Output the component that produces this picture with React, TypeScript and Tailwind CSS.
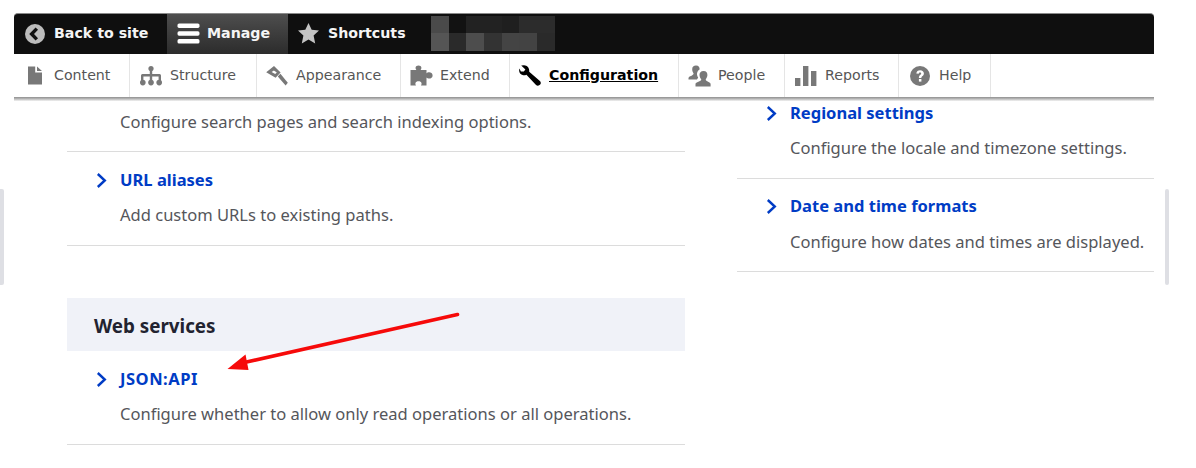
const ICON = '#787878';

function BackIcon() {
  return (
    <svg width="20" height="20" viewBox="0 0 20 20" className="shrink-0">
      <circle cx="10" cy="10" r="10" fill="#bdbdbd" />
      <path d="M11.8 4.6 L6.6 10 L11.8 15.4" fill="none" stroke="#111" strokeWidth="3.4" />
    </svg>
  );
}

function MenuIcon() {
  return (
    <svg width="23" height="21" viewBox="0 0 23 21" className="shrink-0">
      <rect x="0.5" y="0.5" width="22" height="4.4" rx="1.6" fill="#fff" />
      <rect x="0.5" y="8.3" width="22" height="4.4" rx="1.6" fill="#fff" />
      <rect x="0.5" y="16.1" width="22" height="4.4" rx="1.6" fill="#fff" />
    </svg>
  );
}

function StarIcon() {
  return (
    <svg width="21" height="21" viewBox="0 0 21 21" className="shrink-0">
      <path d="M10.5 0 L13.7 6.8 L21 7.6 L15.6 12.6 L17.2 20.5 L10.5 16.6 L3.8 20.5 L5.4 12.6 L0 7.6 L7.3 6.8 Z" fill="#c4c4c4" />
    </svg>
  );
}

function ContentIcon() {
  return (
    <svg width="16" height="19" viewBox="0 0 16 19" className="shrink-0">
      <path d="M1 0.5 H8.2 V6.6 H15 V18.5 H1 Z M10 0.5 L15 5 H10 Z" fill={ICON} />
    </svg>
  );
}

function StructureIcon() {
  return (
    <svg width="22" height="20" viewBox="0 0 22 20" className="shrink-0">
      <circle cx="11" cy="2.6" r="2.6" fill={ICON} />
      <path d="M9.8 4 H12.2 V8 H19.6 Q21 8 21 9.5 V15 H18.6 V10.4 H12.2 V15 H9.8 V10.4 H3.4 V15 H1 V9.5 Q1 8 2.4 8 H9.8 Z" fill={ICON} />
      <circle cx="2.8" cy="16.6" r="2.8" fill={ICON} />
      <circle cx="11" cy="16.6" r="2.8" fill={ICON} />
      <circle cx="19.2" cy="16.6" r="2.8" fill={ICON} />
    </svg>
  );
}

function AppearanceIcon() {
  return (
    <svg width="22" height="20" viewBox="0 0 22 20" className="shrink-0">
      <path d="M8 0 L14.6 6.6 L9.6 11.8 L0.2 6.2 Z M7.9 4.4 L5.6 6 L9.2 8 L10.8 6.4 Z" fill={ICON} fillRule="evenodd" />
      <path d="M11.8 10.4 L14.4 7.8 L21.8 16.8 L19.6 19.4 Z" fill={ICON} />
    </svg>
  );
}

function ExtendIcon() {
  return (
    <svg width="23" height="21" viewBox="0 0 23 21" className="shrink-0">
      <path d="M0.5 5 H6.4 C5 3.6 5.2 0.6 8.5 0.6 C11.8 0.6 12 3.6 10.6 5 H16.5 V8.4 C18 6.6 22.6 6.9 22.6 10.4 C22.6 13.9 18 14.2 16.5 12.4 V20.5 H11 C12.2 18.6 11.6 16.2 8.5 16.2 C5.4 16.2 4.8 18.6 6 20.5 H0.5 Z" fill={ICON} />
    </svg>
  );
}

function WrenchIcon() {
  return (
    <svg width="22" height="21" viewBox="0 0 22 21" className="shrink-0">
      <path d="M5 0.3 L2.2 0.6 L6.4 4.4 L4.8 6.6 L1.9 6.4 L0.4 3.4 C-0.5 6.4 0.7 9.7 4.2 10.2 C5.4 10.3 6.4 10.2 7.4 9.7 L16.8 19.8 C18.2 21.2 20.2 20.8 21.2 19.6 C22.2 18.4 22 16.8 20.6 15.7 L10.2 6.8 C10.6 3.4 8.6 0.4 5 0.3 Z" fill="#000" />
    </svg>
  );
}

function PeopleIcon() {
  return (
    <svg width="23" height="22" viewBox="0 0 23 22" className="shrink-0">
      <path d="M8 0.5 C10.8 0.5 11.8 2.6 11.6 4.6 C10 5.4 8.8 7.4 9 9.6 C9.1 10.8 9.6 11.8 10.2 12.5 L9 14.6 H0.5 V13 C0.5 11 5.6 10.6 5.6 8.4 C4.8 7.4 4.2 5.8 4.2 4.2 C4.2 1.8 5.6 0.5 8 0.5 Z" fill={ICON} />
      <path d="M15.5 6 C18.4 6 19.6 8.2 19.4 10.2 C19.3 11.8 18.4 13.4 17.7 14.4 C17.7 16.4 22.6 16.8 22.6 19 V21.5 H7.5 V19 C7.5 16.8 13.3 16.4 13.3 14.4 C12.4 13.4 11.6 11.8 11.5 10 C11.4 7.8 12.8 6 15.5 6 Z" fill={ICON} />
    </svg>
  );
}

function ReportsIcon() {
  return (
    <svg width="22" height="20" viewBox="0 0 22 20" className="shrink-0">
      <rect x="0" y="12" width="5.4" height="8" fill={ICON} />
      <rect x="8" y="0" width="5.4" height="20" fill={ICON} />
      <rect x="16" y="5" width="5.4" height="15" fill={ICON} />
    </svg>
  );
}

function HelpIcon() {
  return (
    <svg width="20" height="20" viewBox="0 0 20 20" className="shrink-0">
      <circle cx="10" cy="10" r="10" fill={ICON} />
      <path d="M6.3 7.6 C6.4 5.4 8 4.2 10.1 4.2 C12.4 4.2 13.9 5.5 13.9 7.4 C13.9 9.9 11.4 9.8 11.4 12 H8.9 C8.9 8.9 11.2 8.9 11.2 7.5 C11.2 6.8 10.8 6.4 10 6.4 C9.2 6.4 8.8 6.9 8.8 7.8 Z" fill="#fff" />
      <rect x="8.9" y="13" width="2.5" height="2.6" fill="#fff" />
    </svg>
  );
}

function Chevron() {
  return (
    <svg width="11" height="15" viewBox="0 0 11 15" className="shrink-0">
      <path d="M1.8 1 L8.8 7.5 L1.8 14" fill="none" stroke="#003cc5" strokeWidth="2.4" />
    </svg>
  );
}

const trayItems = [
  { label: 'Content', icon: <ContentIcon />, width: 'w-[116px]', pad: 'pl-[13px]', gap: 'gap-[11px]' },
  { label: 'Structure', icon: <StructureIcon />, width: 'w-[127px]', pad: 'pl-[10px]', gap: 'gap-[8px]' },
  { label: 'Appearance', icon: <AppearanceIcon />, width: 'w-[144px]', pad: 'pl-[9px]', gap: 'gap-[8px]' },
  { label: 'Extend', icon: <ExtendIcon />, width: 'w-[109px]', pad: 'pl-[9px]', gap: 'gap-[7px]' },
  { label: 'Configuration', icon: <WrenchIcon />, width: 'w-[169px]', pad: 'pl-[9px]', gap: 'gap-[8px]', active: true },
  { label: 'People', icon: <PeopleIcon />, width: 'w-[106px]', pad: 'pl-[9px]', gap: 'gap-[7px]' },
  { label: 'Reports', icon: <ReportsIcon />, width: 'w-[114px]', pad: 'pl-[10px]', gap: 'gap-[8px]' },
  { label: 'Help', icon: <HelpIcon />, width: 'w-[92px]', pad: 'pl-[11px]', gap: 'gap-[9px]' },
];

const blurRows = [
  ['bg-[#4a4a4a]', 'bg-[#121212]', 'bg-[#222222]', 'bg-[#222222]', 'bg-[#1f1f1f]', 'bg-[#2c2c2c]', 'bg-[#2c2c2c]'],
  ['bg-[#555555]', 'bg-[#2a2a2a]', 'bg-[#4d4d4d]', 'bg-[#333333]', 'bg-[#444444]', 'bg-[#434343]', 'bg-[#2a2a2a]'],
];

function Toolbar() {
  return (
    <div className="relative z-10 mx-[14px] w-[1140px] font-['DejaVu_Sans',sans-serif]">
      <div className="flex h-[41px] items-stretch rounded-t-[4px] border-t border-[#8a8a8a] bg-[#0f0f0f] pb-[2px] text-[14.2px] font-bold text-[#f5f5f5]">
        <div className="-mb-[2px] flex w-[153px] items-center gap-[9px] pb-[1px] pl-[11px]">
          <BackIcon />
          <span>Back to site</span>
        </div>
        <div className="-mb-[2px] flex w-[121px] items-center gap-[7px] bg-gradient-to-b from-[#4e4e4e] to-[#2c2c2c] pb-[1px] pl-[10px]">
          <MenuIcon />
          <span>Manage</span>
        </div>
        <div className="-mb-[2px] flex w-[143px] items-center gap-[9px] pb-[1px] pl-[10px]">
          <StarIcon />
          <span>Shortcuts</span>
        </div>
        <div className="flex flex-col self-center">
          {blurRows.map((row, i) => (
            <div key={i} className="flex">
              {row.map((c, j) => (
                <div key={j} className={`h-[17.5px] w-[17.7px] ${c}`} />
              ))}
            </div>
          ))}
        </div>
      </div>
      <div className="flex h-[43px] items-stretch bg-white text-[14.2px] text-[#565656]">
        {trayItems.map((item) => (
          <div
            key={item.label}
            className={`flex items-center border-r border-[#e5e5e5] ${item.width} ${item.pad} ${item.gap} ${item.active ? 'font-bold text-black underline' : ''}`}
          >
            {item.icon}
            <span>{item.label}</span>
          </div>
        ))}
      </div>
      <div className="absolute inset-x-0 top-[84px] h-[4px] bg-gradient-to-b from-[#8f8f8f] via-[#bbbbbb] to-[#f4f4f4]" />
    </div>
  );
}

function Item({ title, desc, cls, titleCls = '' }: { title: string; desc: string; cls: string; titleCls?: string }) {
  return (
    <div className={`border-b border-[#dcdcdc] ${cls}`}>
      <div className="flex h-[24px] items-center gap-[13px] pl-[29px] text-[16.55px] font-bold leading-[24px] text-[#003cc5]">
        <Chevron />
        <span className={titleCls}>{title}</span>
      </div>
      <p className="mt-[11px] pl-[53px] text-[16.55px] leading-[24px] text-[#55565b]">{desc}</p>
    </div>
  );
}

export default function App() {
  return (
    <div className="relative h-[468px] w-[1196px] overflow-hidden bg-white pt-[13px] font-['Noto_Sans',sans-serif]">
      <Toolbar />

      <div className="flex">
        <div className="ml-[67px] w-[618px]">
          <div className="h-[55px] border-b border-[#dcdcdc] pt-[13px] pl-[53px] text-[16.55px] leading-[24px] text-[#55565b]">
            Configure search pages and search indexing options.
          </div>
          <Item cls="h-[94px] pt-[16px]" title="URL aliases" desc="Add custom URLs to existing paths." />
          <div className="mt-[52px] flex h-[53px] items-center bg-[#f0f2f8] pl-[27px] pt-[3px] text-[18.8px] font-bold text-[#222330]">
            Web services
          </div>
          <Item cls="h-[94px] pt-[16px]" title="JSON:API" titleCls="tracking-[0.5px]" desc="Configure whether to allow only read operations or all operations." />
        </div>
        <div className="ml-[52px] w-[417px]">
          <Item cls="h-[82px] pt-[4px]" title="Regional settings" desc="Configure the locale and timezone settings." />
          <Item cls="h-[93px] pt-[15px] [&>p]:mt-[12px]" title="Date and time formats" desc="Configure how dates and times are displayed." />
        </div>
      </div>

      <div className="absolute left-0 top-[189px] h-[96px] w-[4px] rounded-r-[2px] bg-[#dedfe4]" />
      <div className="absolute left-[1165px] top-[189px] h-[96px] w-[4px] rounded-[2px] bg-[#dedfe4]" />

      <svg width="240" height="64" viewBox="0 0 240 64" className="absolute left-[224px] top-[310px]">
        <path d="M233.5 4.5 L18 53" fill="none" stroke="#f60a0a" strokeWidth="3.6" strokeLinecap="round" />
        <path d="M3.5 59 L21.5 44.5 L24.5 60 Z" fill="#f60a0a" />
      </svg>
    </div>
  );
}
